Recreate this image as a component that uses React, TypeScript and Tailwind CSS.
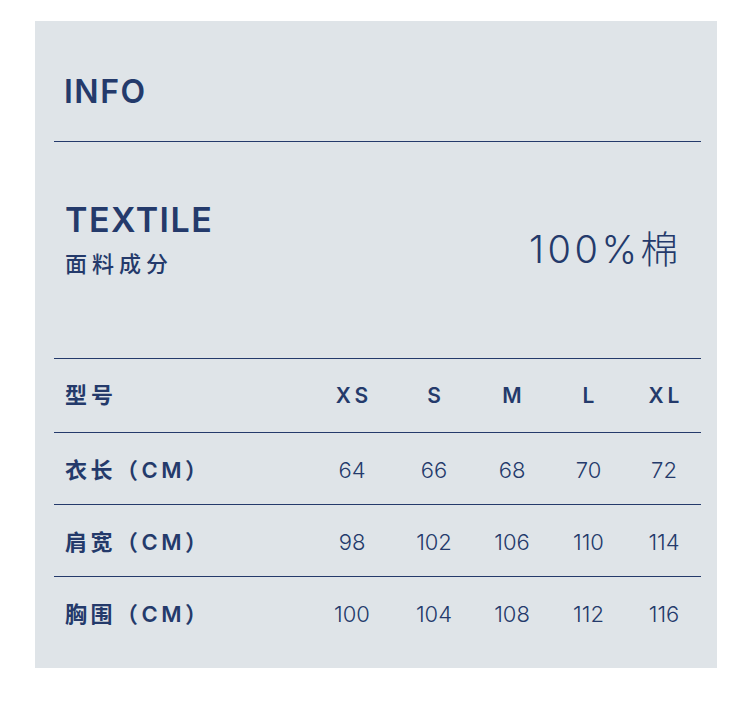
import React from "react";

const sizes = ["XS", "S", "M", "L", "XL"];
const rows: { label: string; values: string[] }[] = [
  { label: "衣长", values: ["64", "66", "68", "70", "72"] },
  { label: "肩宽", values: ["98", "102", "106", "110", "114"] },
  { label: "胸围", values: ["100", "104", "108", "112", "116"] },
];

const font = { fontFamily: 'Inter, "Noto Sans CJK SC", sans-serif' };

export default function App() {
  return (
    <div className="w-[750px] h-[710px] bg-white pt-[21px] pl-[35px]" style={font}>
      <div className="w-[682px] h-[647px] bg-[#dfe4e8] text-[#243a6b] pl-[19px] pr-[16px] flex flex-col">
        <div className="h-[120px] flex items-end pb-[33px] pl-[10px]">
          <span className="text-[32px] font-semibold tracking-[1.5px] leading-none">INFO</span>
        </div>
        <div className="h-px bg-[#243a6b]" />
        <div className="h-[216px] flex items-start justify-between pl-[11px] pr-[19px] pt-[61px]">
          <div className="flex flex-col">
            <span className="text-[34px] font-semibold tracking-[1.5px] leading-none">TEXTILE</span>
            <span className="text-[22px] font-medium tracking-[5px] mt-[16px] leading-none">面料成分</span>
          </div>
          <div className="text-[38px] font-light tracking-[3.5px] leading-none mt-[27px]">100%棉</div>
        </div>
        <div className="h-px bg-[#243a6b]" />
        <div className="grid grid-cols-[256px_84px_80px_76px_77px_74px] h-[73px] items-center">
          <span className="pl-[11px] text-[22px] font-semibold tracking-[4px]">型号</span>
          {sizes.map((s) => (
            <span key={s} className="text-center text-[21px] font-semibold tracking-[4px] pl-[4px]">
              {s}
            </span>
          ))}
        </div>
        {rows.map((r) => (
          <React.Fragment key={r.label}>
            <div className="h-px bg-[#243a6b]" />
            <div className="grid grid-cols-[256px_84px_80px_76px_77px_74px] h-[71px] items-center pt-[3px]">
              <span className="pl-[11px] text-[22px] font-semibold tracking-[3.5px]">
                {r.label}（CM）
              </span>
              {r.values.map((v, i) => (
                <span key={i} className="text-center text-[22px] font-light">
                  {v}
                </span>
              ))}
            </div>
          </React.Fragment>
        ))}
      </div>
    </div>
  );
}
